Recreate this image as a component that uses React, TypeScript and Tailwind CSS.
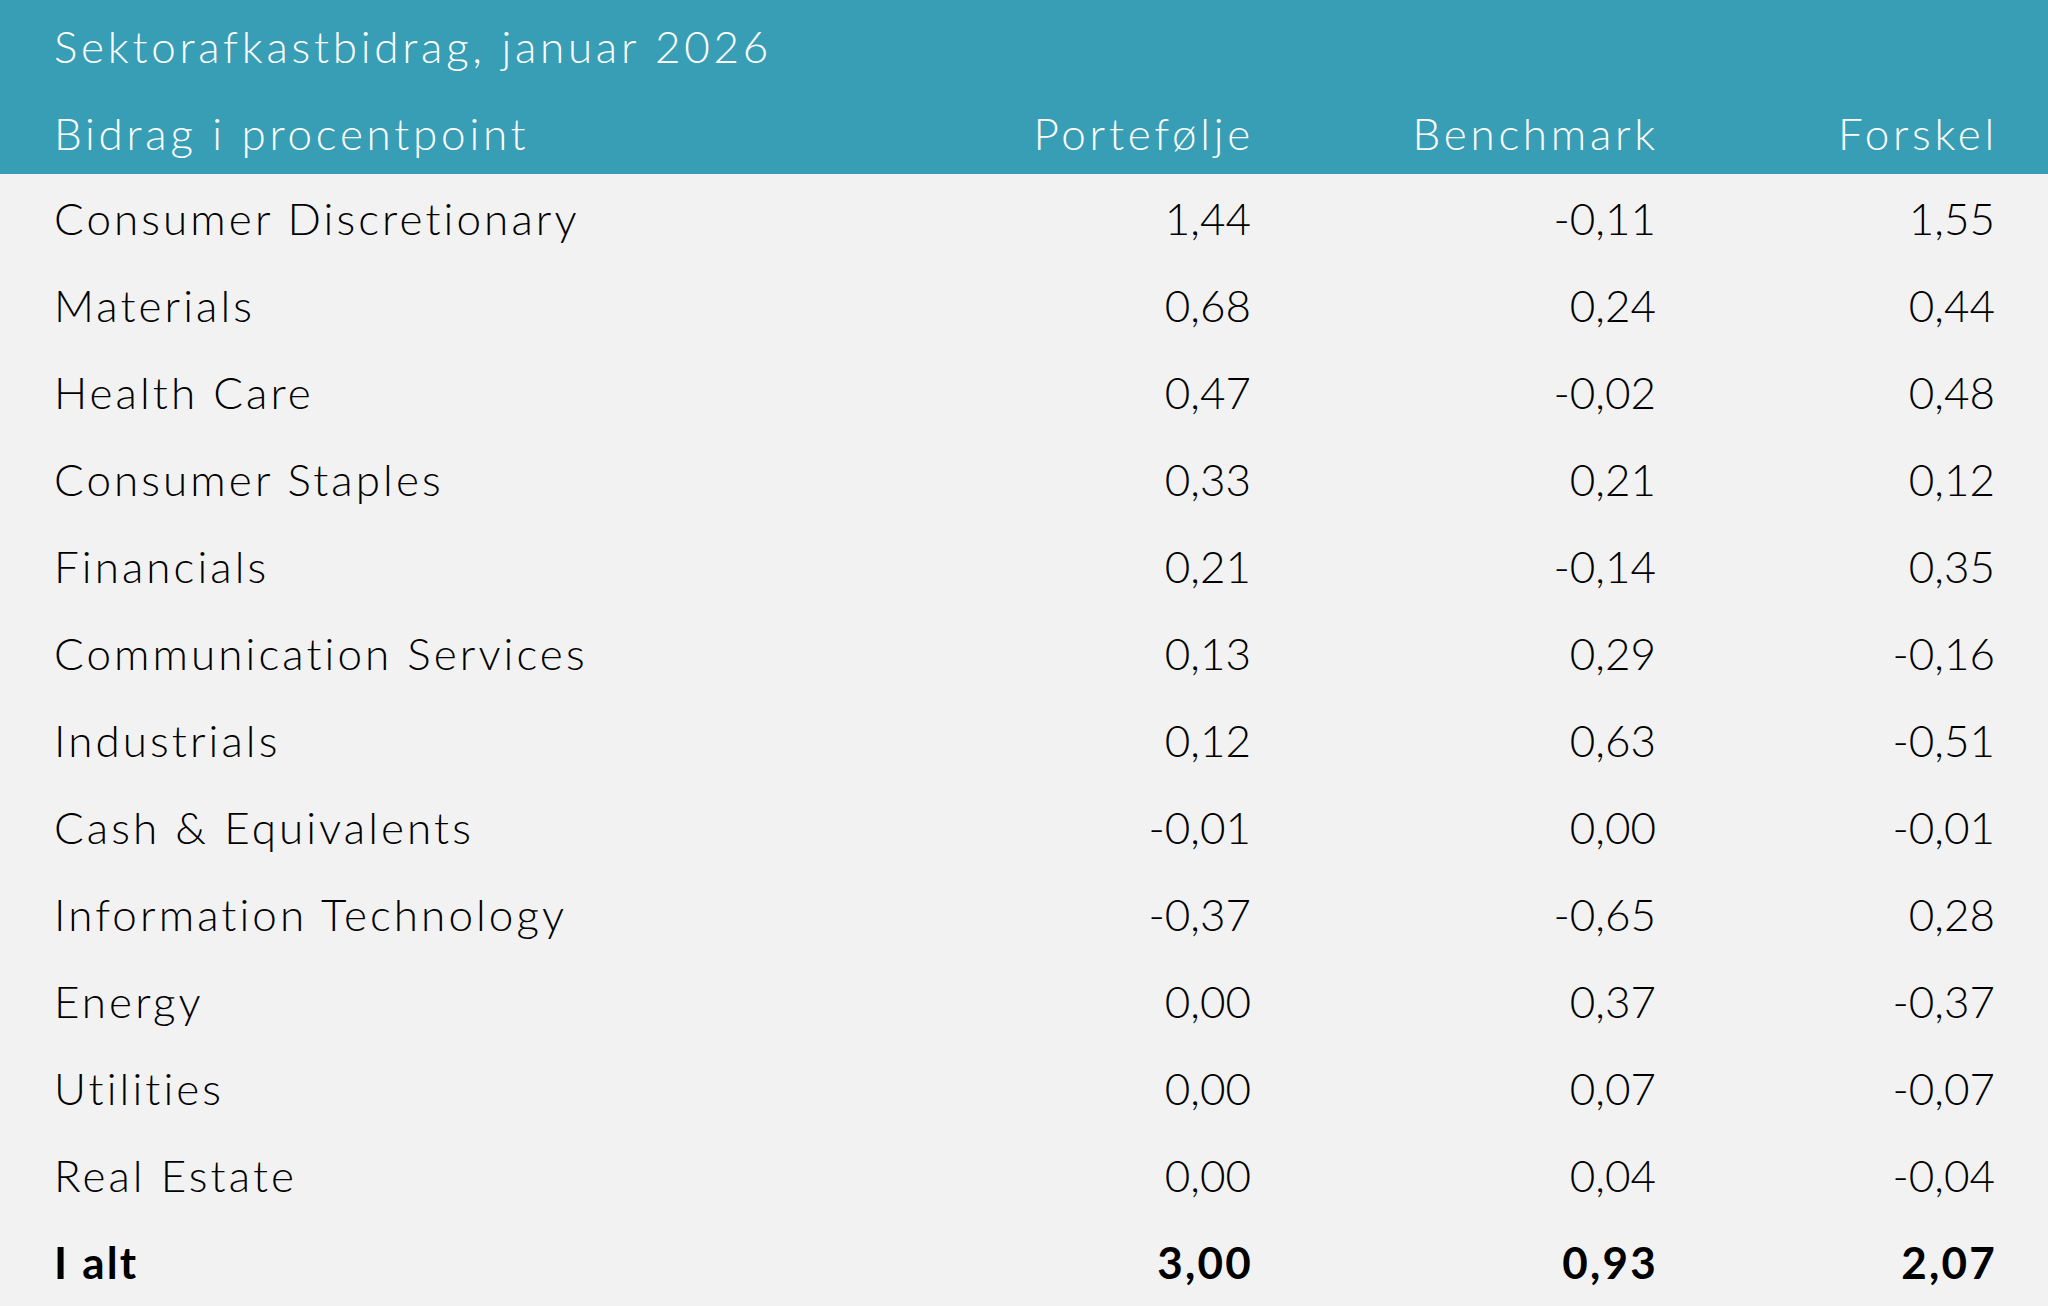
const rows: [string, string, string, string][] = [
  ['Consumer Discretionary', '1,44', '-0,11', '1,55'],
  ['Materials', '0,68', '0,24', '0,44'],
  ['Health Care', '0,47', '-0,02', '0,48'],
  ['Consumer Staples', '0,33', '0,21', '0,12'],
  ['Financials', '0,21', '-0,14', '0,35'],
  ['Communication Services', '0,13', '0,29', '-0,16'],
  ['Industrials', '0,12', '0,63', '-0,51'],
  ['Cash & Equivalents', '-0,01', '0,00', '-0,01'],
  ['Information Technology', '-0,37', '-0,65', '0,28'],
  ['Energy', '0,00', '0,37', '-0,37'],
  ['Utilities', '0,00', '0,07', '-0,07'],
  ['Real Estate', '0,00', '0,04', '-0,04'],
]

const grid = 'grid grid-cols-[1fr_400px_405px_339px] items-center pl-[54px] pr-[53px]'

export default function App() {
  return (
    <div className="w-[2048px] h-[1306px] bg-[#f2f2f2] font-['Lato','Liberation_Sans',sans-serif] font-light text-[44px] text-black overflow-hidden">
      <div className="bg-[#379eb5] text-white h-[174px] flex flex-col tracking-[0.085em]">
        <div className="h-[92px] flex items-center pl-[54px]">Sektorafkastbidrag, januar 2026</div>
        <div className={`${grid} h-[82px]`}>
          <div>Bidrag i procentpoint</div>
          <div className="text-right -mr-[3px]">Portefølje</div>
          <div className="text-right -mr-[3px]">Benchmark</div>
          <div className="text-right -mr-[3px]">Forskel</div>
        </div>
      </div>
      {rows.map((r) => (
        <div key={r[0]} className={`${grid} h-[87px]`}>
          <div className="tracking-[0.07em]">{r[0]}</div>
          <div className="text-right">{r[1]}</div>
          <div className="text-right">{r[2]}</div>
          <div className="text-right">{r[3]}</div>
        </div>
      ))}
      <div className={`${grid} h-[87px] font-bold tracking-[0.05em]`}>
        <div>I alt</div>
        <div className="text-right -mr-[2px]">3,00</div>
        <div className="text-right -mr-[2px]">0,93</div>
        <div className="text-right -mr-[2px]">2,07</div>
      </div>
    </div>
  )
}
